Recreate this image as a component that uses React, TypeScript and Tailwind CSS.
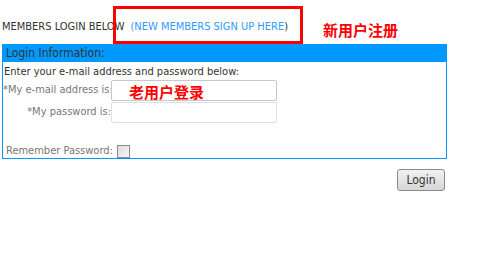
export default function App() {
  return (
    <div className="relative w-[487px] h-[255px] bg-white font-['DejaVu_Sans_Condensed','DejaVu_Sans',sans-serif] [font-stretch:semi-condensed] text-[11px] text-[#444]">
      <div className="h-[44px] flex items-center pl-[2px] pt-[10px] whitespace-nowrap">
        <span className="text-[#333]">MEMBERS LOGIN BELOW</span>
        <span className="ml-[6px] text-[#3399ff]">
          (NEW MEMBERS SIGN UP HERE<span className="text-[#333]">)</span>
        </span>
      </div>

      {/* annotations */}
      <div className="absolute left-[113px] top-[6px] w-[190px] h-[38px] border-[3px] border-[#ff0000]" />
      <div className="absolute left-[323px] top-[21px] text-[15px] leading-[18px] font-bold text-[#ff0000] font-['Noto_Sans_CJK_SC',sans-serif]">
        新用户注册
      </div>

      <div className="ml-[2px] w-[445px] border border-[#0099ff] whitespace-nowrap">
        <div className="h-[17px] bg-[#0099ff] pl-[3px] text-[12px] leading-[17px] text-[#333]">
          Login Information:
        </div>
        <div className="pl-[1px] pt-[2px] leading-[16px] text-[#333]">
          Enter your e-mail address and password below:
        </div>
        <div className="flex flex-col">
          <div className="flex items-center h-[21px]">
            <label className="w-[108px] text-right text-[#777]">*My e-mail address is:</label>
            <div className="relative">
              <input className="w-[166px] h-[21px] border border-[#c8c8c8] rounded-[2px] bg-white" />
              <span className="absolute left-[18px] top-[3px] text-[15px] leading-[18px] font-bold text-[#ff0000] font-['Noto_Sans_CJK_SC',sans-serif]">
                老用户登录
              </span>
            </div>
          </div>
          <div className="flex items-center h-[22px] pt-[1px]">
            <label className="w-[108px] text-right text-[#777]">*My password is:</label>
            <input type="password" className="w-[166px] h-[21px] border border-[#dde0e6] rounded-[2px] bg-white" />
          </div>
        </div>
        <div className="flex items-center h-[35px] pt-[22px] pl-[3px] text-[#777]">
          <span>Remember Password:</span>
          <span className="ml-[4px] w-[13px] h-[13px] border border-[#8a8a8a] bg-gradient-to-br from-[#dcdcdc] to-[#f6f6f6]" />
        </div>
      </div>

      <div className="w-[445px] flex justify-end pt-[10px]">
        <button className="w-[48px] h-[22px] rounded-[3px] border border-[#8a8a8a] bg-gradient-to-b from-[#f2f2f2] to-[#d6d6d6] text-[12px] text-[#333]">
          Login
        </button>
      </div>
    </div>
  );
}
